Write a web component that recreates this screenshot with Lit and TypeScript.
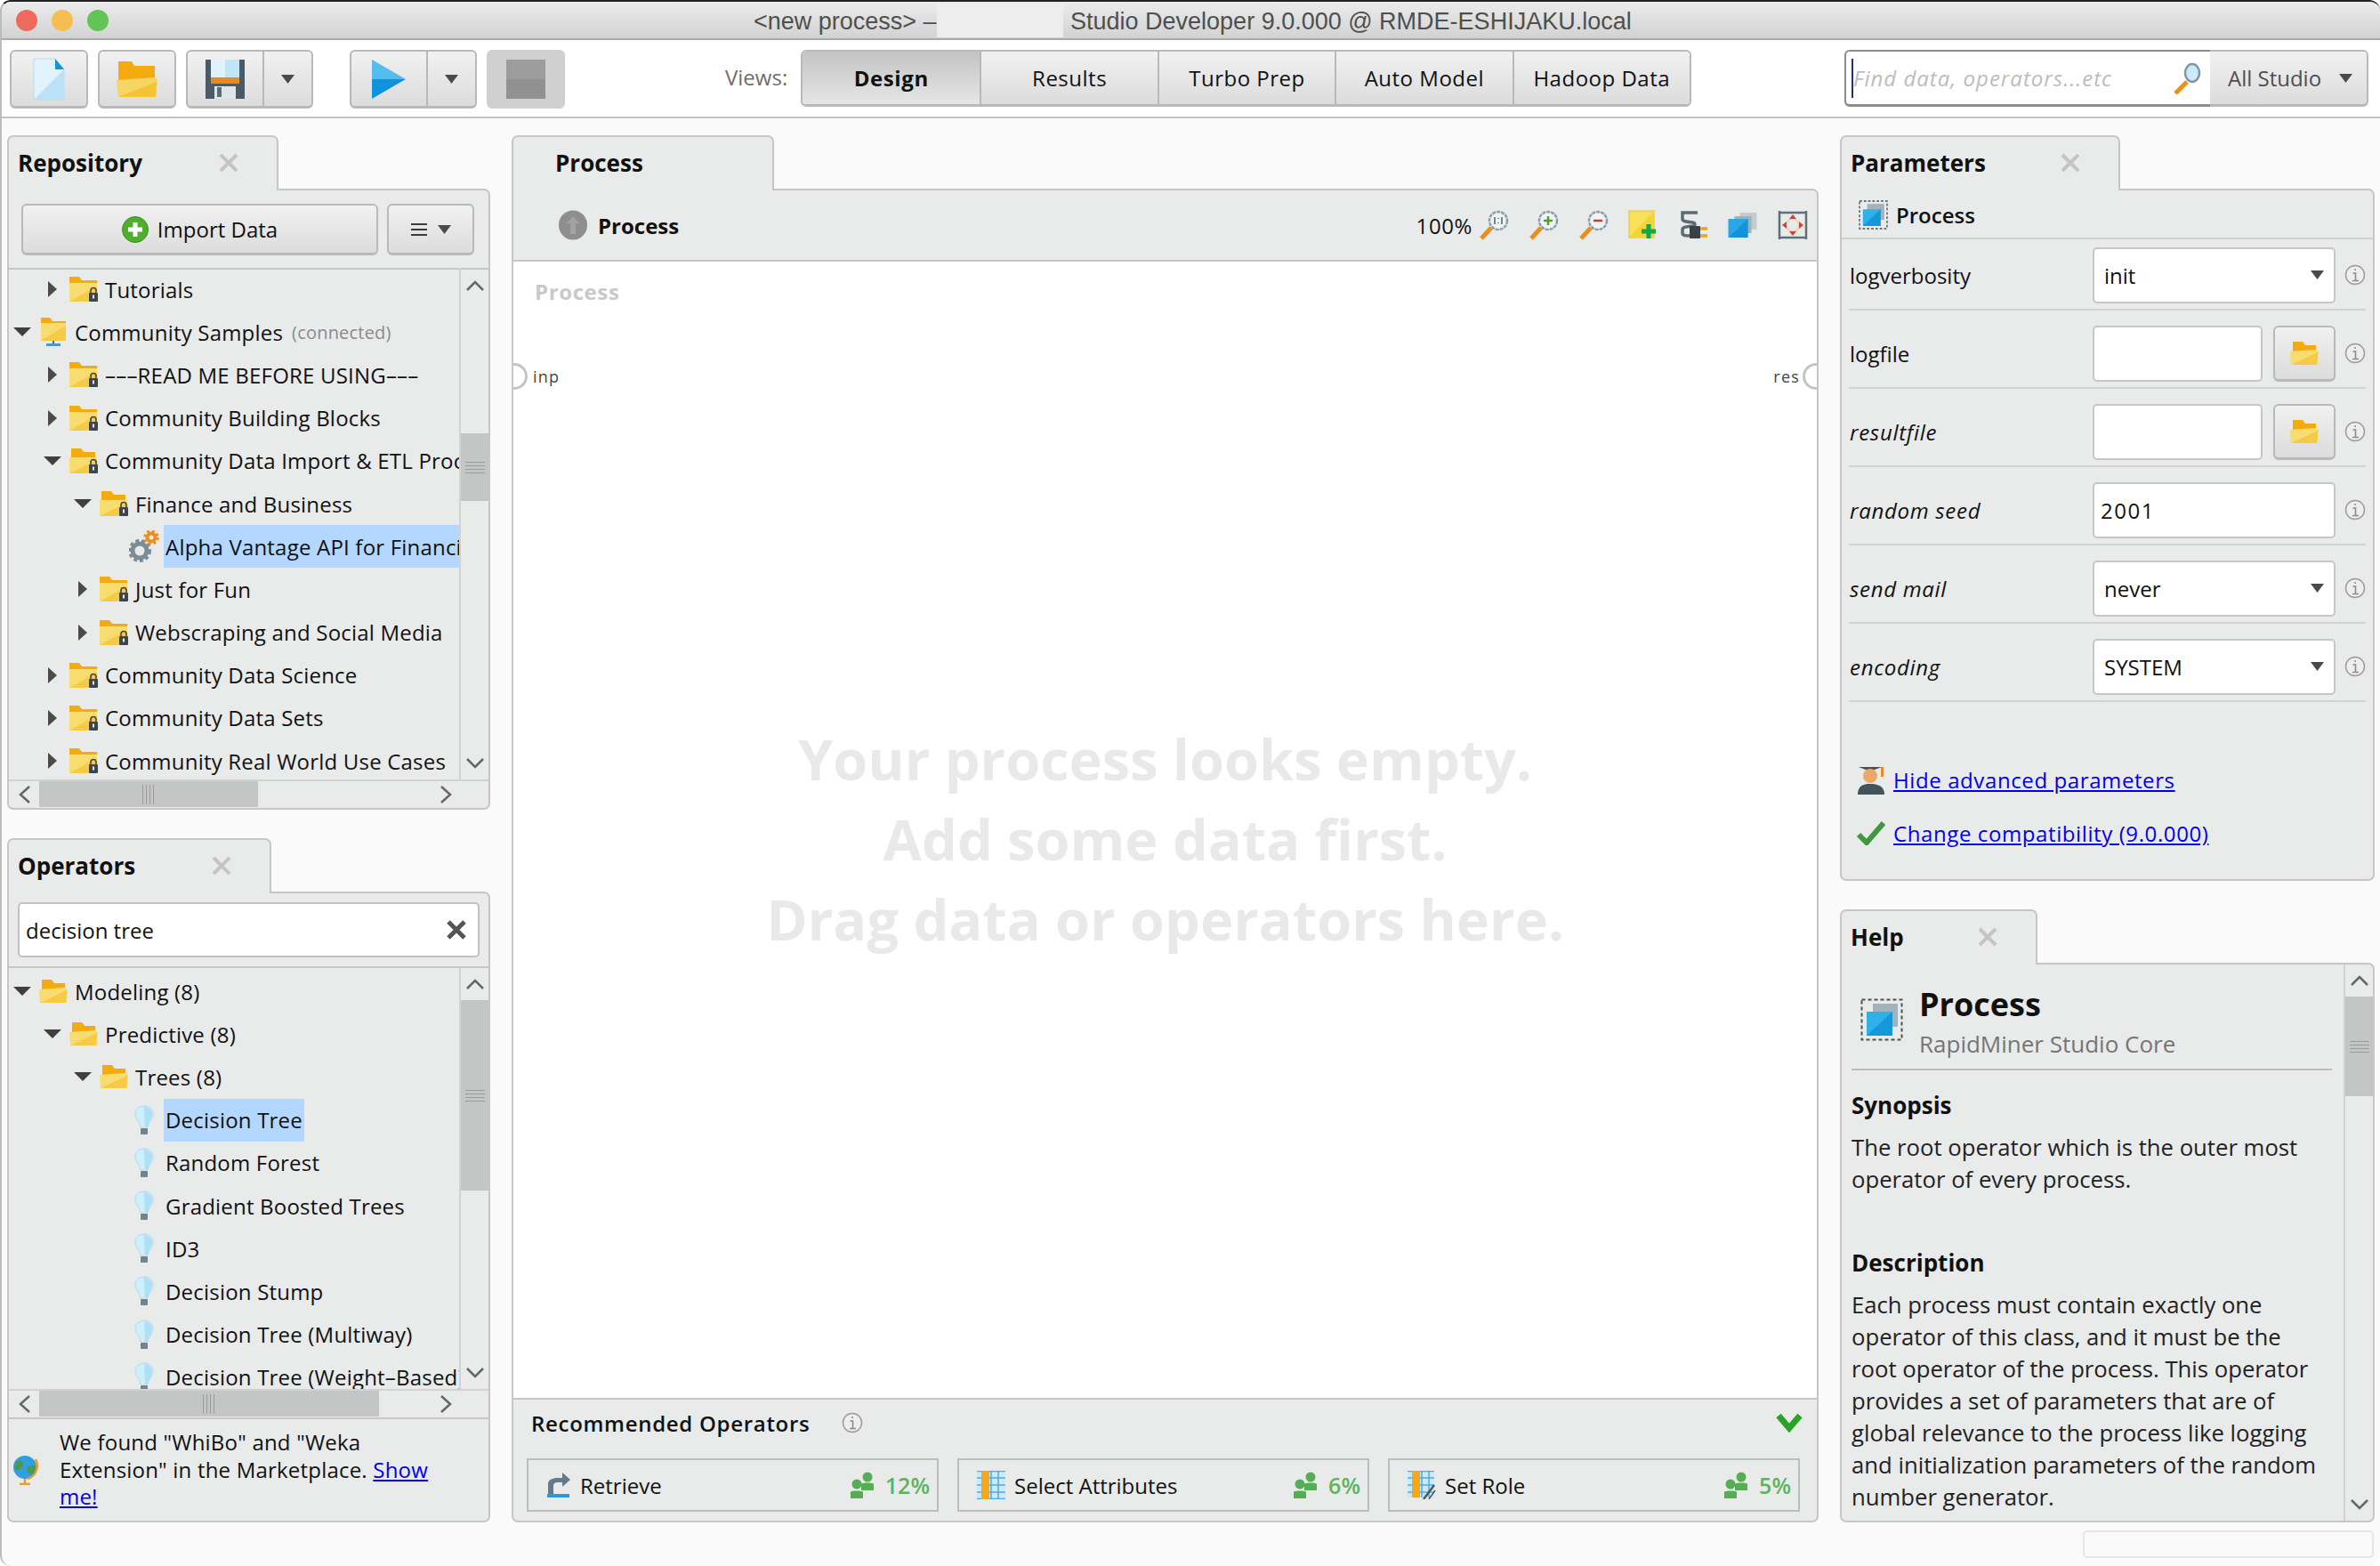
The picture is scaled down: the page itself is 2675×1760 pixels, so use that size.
import { LitElement, html, svg, css } from 'lit';
import { customElement } from 'lit/decorators.js';

// small shared icons
const arrowRight = html`<svg width="12" height="18" viewBox="0 0 12 18"><path d="M1 0l10 9-10 9z" fill="#4b4b4b"/></svg>`;
const arrowDown = html`<svg width="20" height="12" viewBox="0 0 20 12"><path d="M0 1h20L10 11z" fill="#3f3f3f"/></svg>`;
const caret = html`<svg width="15" height="10" viewBox="0 0 15 10"><path d="M0 0h15L7.5 10z" fill="#4a4a4a"/></svg>`;

const lock = svg`<path d="M24 18v-2.500a3 3 0 0 1 6 0V18" fill="none" stroke="#3f4649" stroke-width="1.600"/><rect x="22" y="18" width="10" height="10" rx="1" fill="#3f4649"/><rect x="26" y="20.500" width="2" height="4" fill="#e8e8e8"/>`;
const folderLock = html`<svg width="32" height="28" viewBox="0 0 32 28"><path d="M0 0h11l3 4h17v24H0z" fill="#f4ab10"/><path d="M0 7h31v21H0z" fill="#f7dc70"/><path d="M0 28L31 11v17z" fill="#f5ca44"/>${lock}</svg>`;
const folderLockOpen = html`<svg width="32" height="28" viewBox="0 0 32 28"><path d="M2 0h11l3 4h13v14H2z" fill="#f4ab10"/><path d="M0 10h31l1 18H0z" fill="#f7dc70"/><path d="M0 28L31 13l1 15z" fill="#f5ca44"/>${lock}</svg>`;
const folderServer = html`<svg width="30" height="32" viewBox="0 0 30 32"><path d="M1 0h10l3 4h15v22H1z" fill="#f4ab10"/><path d="M1 6h28v20H1z" fill="#f7dc70"/><path d="M1 26L29 9v17z" fill="#f5ca44"/><rect x="14" y="26" width="2" height="3" fill="#5b6b75"/><rect x="7" y="29" width="16" height="3" fill="#4a97c9"/></svg>`;
const folderOpen = html`<svg width="32" height="28" viewBox="0 0 32 28"><path d="M3 1h11l3 4h12v14H3z" fill="#f4ab10"/><path d="M0 12l29-2 3 2-1 15H1z" fill="#f7dc70"/><path d="M1 27L31 13l-1 14z" fill="#f5ca44"/></svg>`;
const bulb = html`<svg width="22" height="34" viewBox="0 0 22 34"><path d="M11 1C5 1 1 5 1 10c0 6 5 8 6 15h8c1-7 6-9 6-15 0-5-4-9-10-9z" fill="#cdeefb" stroke="#b4dbea"/><path d="M11 2c5 0 9 4 9 8 0 5-4 8-5 15h-3z" fill="#aee0f6"/><rect x="7" y="26" width="8" height="7" rx="1" fill="#75848c"/></svg>`;
const gears = html`<svg width="34" height="36" viewBox="0 0 34 36"><circle cx="12" cy="23" r="8" fill="none" stroke="#7a8c96" stroke-width="5"/><circle cx="12" cy="23" r="11.500" fill="none" stroke="#7a8c96" stroke-width="3" stroke-dasharray="4 3"/><circle cx="25" cy="8" r="4.500" fill="none" stroke="#ea8f1d" stroke-width="4"/><circle cx="25" cy="8" r="7.500" fill="none" stroke="#ea8f1d" stroke-width="2.500" stroke-dasharray="3 3"/></svg>`;
const info = html`<svg class="info" width="24" height="24" viewBox="0 0 24 24"><circle cx="12" cy="12" r="10.500" fill="#eeeeee" stroke="#9c9c9c" stroke-width="1.500"/><path d="M12 5v2M9.500 10H12.500V18M9 18.500h7" fill="none" stroke="#8a8a8a" stroke-width="1.600"/></svg>`;
const closeX = html`<svg width="22" height="22" viewBox="0 0 22 22"><path d="M2 2l18 18M20 2L2 20" stroke="#c4c4c4" stroke-width="4"/></svg>`;
const layers = html`<svg width="33" height="30" viewBox="0 0 33 30"><rect x="13" y="1" width="19" height="19" fill="#c3cbd0"/><rect x="7" y="5" width="19" height="19" fill="#9fb0b9"/><rect x="0" y="8" width="22" height="21" fill="#2aa7e6"/><path d="M0 29L22 8v21z" fill="#1593d8"/></svg>`;
const operatorIcon = (s: number) => html`<svg width="${s}" height="${s}" viewBox="0 0 48 48"><rect x="1.500" y="1.500" width="45" height="45" fill="none" stroke="#44525a" stroke-width="2" stroke-dasharray="4 3"/><rect x="14" y="6" width="28" height="26" fill="#a4b3bb"/><rect x="7" y="15" width="29" height="27" fill="#2fb0ea"/><path d="M7 42L36 15v27z" fill="#1598da"/></svg>`;
const people = html`<svg width="30" height="30" viewBox="0 0 30 30"><g fill="#55ad55"><circle cx="20" cy="6" r="5.500"/><path d="M13 14c0-2 14-2 14 0v7H13z"/><circle cx="8" cy="14" r="5.500"/><path d="M1 23c0-2 14-2 14 0v7H1z"/></g></svg>`;
const tableIcon = html`<svg width="32" height="32" viewBox="0 0 32 32"><rect width="32" height="32" fill="#cfe8f6"/><path d="M0 .500h32M0 8h32M0 16h32M0 24h32M0 31.500h32M16 0v32M24 0v32" stroke="#47ade5" stroke-width="1.500"/><rect x="5" y="0" width="9" height="32" fill="#f5a81c"/></svg>`;
const roleIcon = html`<svg width="32" height="32" viewBox="0 0 32 32"><rect width="30" height="30" fill="#cfe8f6"/><path d="M0 .500h30M0 8h30M0 16h30M0 24h30M16 0v30M24 0v30" stroke="#47ade5" stroke-width="1.500"/><rect x="5" y="0" width="9" height="30" fill="#f5a81c"/><path d="M18 32l12-16" stroke="#555" stroke-width="2.500"/><path d="M24 32l7-10" stroke="#555" stroke-width="1.500"/></svg>`;

interface TreeRow {
  d: number;
  t: string;
  kind: 'lock' | 'lockOpen' | 'server' | 'open' | 'gear' | 'bulb';
  exp?: boolean;
  leaf?: boolean;
  sel?: boolean;
  note?: string;
}

const repoRows: TreeRow[] = [
  { d: 1, t: 'Tutorials', kind: 'lock' },
  { d: 0, t: 'Community Samples', kind: 'server', exp: true, note: '(connected)' },
  { d: 1, t: '–––READ ME BEFORE USING–––', kind: 'lock' },
  { d: 1, t: 'Community Building Blocks', kind: 'lock' },
  { d: 1, t: 'Community Data Import & ETL Processing', kind: 'lockOpen', exp: true },
  { d: 2, t: 'Finance and Business', kind: 'lockOpen', exp: true },
  { d: 3, t: 'Alpha Vantage API for Financial Data', kind: 'gear', leaf: true, sel: true },
  { d: 2, t: 'Just for Fun', kind: 'lock' },
  { d: 2, t: 'Webscraping and Social Media', kind: 'lock' },
  { d: 1, t: 'Community Data Science', kind: 'lock' },
  { d: 1, t: 'Community Data Sets', kind: 'lock' },
  { d: 1, t: 'Community Real World Use Cases', kind: 'lock' },
];

const opRows: TreeRow[] = [
  { d: 0, t: 'Modeling (8)', kind: 'open', exp: true },
  { d: 1, t: 'Predictive (8)', kind: 'open', exp: true },
  { d: 2, t: 'Trees (8)', kind: 'open', exp: true },
  { d: 3, t: 'Decision Tree', kind: 'bulb', leaf: true, sel: true },
  { d: 3, t: 'Random Forest', kind: 'bulb', leaf: true },
  { d: 3, t: 'Gradient Boosted Trees', kind: 'bulb', leaf: true },
  { d: 3, t: 'ID3', kind: 'bulb', leaf: true },
  { d: 3, t: 'Decision Stump', kind: 'bulb', leaf: true },
  { d: 3, t: 'Decision Tree (Multiway)', kind: 'bulb', leaf: true },
  { d: 3, t: 'Decision Tree (Weight–Based)', kind: 'bulb', leaf: true },
];

const kindIcons = {
  lock: folderLock,
  lockOpen: folderLockOpen,
  server: folderServer,
  open: folderOpen,
  gear: gears,
  bulb,
};

const params = [
  { label: 'logverbosity', type: 'select', value: 'init' },
  { label: 'logfile', type: 'file', value: '' },
  { label: 'resultfile', type: 'file', value: '', em: true },
  { label: 'random seed', type: 'text', value: '2001', em: true },
  { label: 'send mail', type: 'select', value: 'never', em: true },
  { label: 'encoding', type: 'select', value: 'SYSTEM', em: true },
];

@customElement('app-root')
export class AppRoot extends LitElement {
  static styles = css`
    :host {
      display: block;
      width: 2675px;
      height: 1760px;
      background: #fff;
      font-family: 'Open Sans', 'Noto Sans', sans-serif;
      font-size: 24px;
      color: #111;
      overflow: hidden;
    }
    * {
      box-sizing: border-box;
    }
    svg {
      display: block;
      flex: none;
    }
    .window {
      height: 1760px;
      display: flex;
      flex-direction: column;
      background: #fafafa;
      border-left: 2px solid #bcbcbc;
      border-top: 2px solid #222;
      border-radius: 12px;
      overflow: hidden;
    }

    /* title bar */
    .titlebar {
      height: 43px;
      flex: none;
      display: flex;
      align-items: center;
      padding-top: 3px;
      background: linear-gradient(#ececec, #d2d2d2);
      border-bottom: 2px solid #a9a9a9;
      font-family: 'Liberation Sans', Arial, sans-serif;
      font-size: 27px;
      color: #4f4f4f;
    }
    .lights {
      display: flex;
      gap: 16px;
      margin: -3px 0 0 16px;
      width: 829px;
    }
    .lights i {
      width: 24px;
      height: 24px;
      border-radius: 50%;
    }
    .red { background: #ee6a5f; }
    .yellow { background: #f6bd50; }
    .green { background: #61c454; }
    .doc-name {
      width: 206px;
      white-space: nowrap;
    }
    .blanked {
      width: 142px;
      height: 38px;
      margin: -3px 8px 0 0;
      background: #ededed;
    }

    /* toolbar */
    .toolbar {
      height: 88px;
      flex: none;
      display: flex;
      align-items: flex-start;
      padding: 11px 0 0 9px;
      background: #fff;
      border-bottom: 2px solid #c2c2c2;
    }
    .btn {
      display: flex;
      height: 66px;
      border: 2px solid #b9b9b9;
      border-bottom-width: 3px;
      border-radius: 6px;
      background: linear-gradient(#f1f1f1, #dcdcdc);
      overflow: hidden;
    }
    .cell {
      display: flex;
      align-items: center;
      justify-content: center;
    }
    .cell-main { width: 84px; }
    .cell-more {
      width: 55px;
      border-left: 2px solid #b9b9b9;
    }
    .stop { background: #d0d0d0; border-color: #d0d0d0; }
    .gap-s { margin-left: 11px; }
    .gap-l { margin-left: 41px; }
    .views-label {
      margin-left: 180px;
      width: 85px;
      line-height: 62px;
      color: #6e6e6e;
    }
    .views {
      display: flex;
      height: 64px;
      border: 2px solid #b9b9b9;
      border-bottom-width: 3px;
      border-radius: 6px;
      overflow: hidden;
    }
    .views div {
      width: 199.400px;
      display: flex;
      align-items: center;
      justify-content: center;
      letter-spacing: 0.5px;
      background: linear-gradient(#f1f1f1, #dcdcdc);
      border-left: 2px solid #b9b9b9;
    }
    .views div:first-child {
      border-left: 0;
      font-weight: 700;
      letter-spacing: 0.6px;
      background: linear-gradient(#c4c4c4, #e6e6e6);
    }
    .search {
      display: flex;
      height: 64px;
      margin-left: 172px;
    }
    .search-field {
      width: 411px;
      display: flex;
      align-items: center;
      justify-content: space-between;
      padding: 0 10px 0 6px;
      background: #fff;
      border: 2px solid #8c8c8c;
      border-bottom-width: 3px;
      border-right: 0;
      border-radius: 6px 0 0 6px;
      font-style: italic;
      letter-spacing: 1px;
      color: #bcbcbc;
    }
    .search-field span {
      border-left: 2px solid #23307a;
      line-height: 44px;
    }
    .scope {
      width: 178px;
      display: flex;
      align-items: center;
      justify-content: space-between;
      padding: 0 16px 0 20px;
      color: #4f4f4f;
      background: linear-gradient(#f1f1f1, #dcdcdc);
      border: 2px solid #b9b9b9;
      border-bottom-width: 3px;
      border-left: 0;
      border-radius: 0 6px 6px 0;
    }

    /* dock layout */
    .main {
      flex: 1;
      min-height: 0;
      display: grid;
      grid-template-columns: 543px 1469px 601px;
      column-gap: 24px;
      padding: 19px 0 0 6px;
    }
    .col {
      display: flex;
      flex-direction: column;
      gap: 32px;
      min-height: 0;
    }
    .dock {
      display: flex;
      flex-direction: column;
      flex: 1;
      min-height: 0;
    }
    .dock.repo { flex: none; height: 758px; }
    .dock.params { flex: none; height: 838px; }
    .tab {
      height: 62px;
      flex: none;
      display: flex;
      align-items: center;
      justify-content: space-between;
      padding: 0 43px 2px 10px;
      margin-bottom: -2px;
      position: relative;
      background: #e9eaea;
      border: 2px solid #c6c6c6;
      border-bottom: 0;
      border-radius: 7px 7px 0 0;
      font-size: 26px;
      font-weight: 700;
    }
    .tab.plain { padding-left: 47px; }
    .body {
      flex: 1;
      min-height: 0;
      display: flex;
      flex-direction: column;
      background: #e9eaea;
      border: 2px solid #c6c6c6;
      border-radius: 0 7px 7px 7px;
      overflow: hidden;
    }

    /* repository */
    .repo-actions {
      height: 89px;
      flex: none;
      display: flex;
      gap: 10px;
      padding: 15px 0 0 14px;
      border-bottom: 2px solid #c6c6c6;
    }
    .push {
      height: 58px;
      display: flex;
      align-items: center;
      justify-content: center;
      gap: 10px;
      background: linear-gradient(#f1f1f1, #dcdcdc);
      border: 2px solid #b9b9b9;
      border-bottom-width: 3px;
      border-radius: 6px;
    }
    .import { width: 401px; }
    .menu { width: 98px; gap: 12px; }

    /* trees */
    .tree-wrap {
      flex: 1;
      min-height: 0;
      display: flex;
    }
    .tree {
      flex: 1;
      min-width: 0;
      overflow: hidden;
      letter-spacing: 0.2px;
      border-right: 2px solid #d2d2d2;
    }
    .repo-tree { margin-top: -2px; }
    .ops-tree { padding-top: 2px; }
    .row {
      height: 48.200px;
      display: flex;
      align-items: center;
      white-space: nowrap;
    }
    .twist {
      width: 22px;
      flex: none;
      display: flex;
      justify-content: center;
      margin-right: 8px;
    }
    .node {
      width: 32px;
      flex: none;
      margin-right: 6px;
      display: flex;
      justify-content: center;
    }
    .label {
      height: 100%;
      display: flex;
      align-items: center;
      padding: 0 2px;
      flex: none;
    }
    .label.sel { background: #b3d7ff; }
    .note {
      margin-left: 10px;
      font-size: 20px;
      color: #8a8a8a;
    }
    .vbar {
      width: 31px;
      flex: none;
      display: flex;
      flex-direction: column;
    }
    .chev {
      height: 36px;
      flex: none;
      display: flex;
      align-items: center;
      justify-content: center;
    }
    .track {
      flex: 1;
      min-height: 0;
    }
    .thumb {
      display: flex;
      align-items: center;
      justify-content: center;
      background: #c4c6c6;
    }
    .grip-h {
      width: 22px;
      height: 13px;
      background: repeating-linear-gradient(#9b9b9b 0 1px, transparent 1px 4px);
    }
    .grip-v {
      width: 15px;
      height: 22px;
      background: repeating-linear-gradient(90deg, #9b9b9b 0 1px, transparent 1px 4px);
    }
    .hbar {
      height: 32px;
      flex: none;
      display: flex;
      border-top: 2px solid #d2d2d2;
    }
    .hbar .chev {
      height: auto;
      width: 34px;
    }
    .hbar .thumb {
      margin-bottom: 1px;
    }
    .hbar .track {
      display: flex;
    }
    .hbar .end {
      width: 68px;
      justify-content: flex-start;
      padding-left: 14px;
    }

    /* operators */
    .op-search {
      height: 84px;
      flex: none;
      padding: 10px 10px 0 10px;
      border-bottom: 2px solid #c6c6c6;
    }
    .op-field {
      height: 62px;
      display: flex;
      align-items: center;
      justify-content: space-between;
      padding: 0 12px 0 7px;
      background: #fff;
      border: 2px solid #c2c2c2;
      border-radius: 5px;
    }
    .hint {
      height: 116px;
      flex: none;
      display: flex;
      align-items: center;
      gap: 24px;
      padding: 0 0 0 4px;
      border-top: 2px solid #c6c6c6;
      font-size: 24px;
      letter-spacing: 0.2px;
      line-height: 30.500px;
    }
    .hint div { width: 440px; }
    a {
      color: #0000ee;
      text-decoration: underline;
    }

    /* process editor */
    .proc-head {
      height: 80px;
      flex: none;
      display: flex;
      align-items: center;
      padding: 0 10px 0 51px;
      border-bottom: 2px solid #c6c6c6;
    }
    .proc-head b {
      margin-left: 12px;
      flex: 1;
    }
    .tools {
      display: flex;
      align-items: center;
      gap: 22px;
    }
    .tools svg { width: 34px; }
    .zoom-pct {
      margin-right: -15px;
      letter-spacing: 0.6px;
    }
    .canvas {
      flex: 1;
      min-height: 0;
      position: relative;
      background: #fff;
      display: flex;
      flex-direction: column;
      align-items: center;
      justify-content: center;
      padding-top: 20px;
      font-size: 63px;
      line-height: 90px;
      font-weight: 700;
      color: #e9e9e9;
    }
    .canvas-title {
      position: absolute;
      left: 24px;
      top: 17px;
      font-size: 24px;
      line-height: 34px;
      font-weight: 700;
      letter-spacing: 0.6px;
      color: #c9c9c9;
    }
    .port {
      position: absolute;
      top: 113px;
      display: flex;
      align-items: center;
      font-size: 18px;
      letter-spacing: 1.200px;
      line-height: 32px;
      font-weight: 400;
      color: #444;
    }
    .port i {
      width: 16px;
      height: 30px;
      border: 3px solid #c4c4c4;
      background: #fff;
    }
    .port-in { left: 0; gap: 6px; }
    .port-in i { border-radius: 0 16px 16px 0; border-left: 0; }
    .port-out { right: 0; gap: 3px; }
    .port-out i { border-radius: 16px 0 0 16px; border-right: 0; }
    .rec {
      height: 138px;
      flex: none;
      padding: 0 16px 0 15px;
      border-top: 2px solid #c6c6c6;
    }
    .rec-head {
      height: 66px;
      display: flex;
      align-items: center;
      padding: 0 0 14px 5px;
      font-weight: 600;
      letter-spacing: 0.7px;
    }
    .rec-head svg.info { margin-left: 36px; }
    .rec-head .collapse { margin-left: auto; margin-right: 0; }
    .cards {
      display: flex;
      gap: 21px;
    }
    .card {
      width: 463px;
      height: 60px;
      display: flex;
      align-items: center;
      gap: 10px;
      padding: 0 8px 0 20px;
      border: 2px solid #bdbdbd;
    }
    .card span { flex: 1; }
    .card em {
      font-style: normal;
      font-size: 25px;
      font-weight: 600;
      color: #5db45d;
    }

    /* parameters */
    .param-head {
      height: 55px;
      flex: none;
      display: flex;
      align-items: center;
      gap: 9px;
      padding: 1px 0 0 19px;
      border-bottom: 2px solid #cfcfcf;
      font-weight: 600;
    }
    .param {
      height: 88px;
      flex: none;
      display: grid;
      grid-template-columns: 274px 273px 1fr;
      align-items: center;
      margin: 0 8px;
      padding: 10px 0 0 0;
      border-bottom: 2px solid #d2d2d2;
    }
    .param-head + .param {
      height: 80px;
      padding-top: 2px;
    }
    .param > span {
      padding-left: 1px;
    }
    .param > span.em {
      font-style: italic;
      letter-spacing: 0.7px;
    }
    .value {
      height: 63px;
      display: flex;
      align-items: center;
      justify-content: space-between;
      padding: 0 11px;
      background: #fff;
      border: 2px solid #c6c6c6;
      border-radius: 5px;
    }
    .value.seed { padding-left: 7px; letter-spacing: 1.500px; }
    .file {
      display: grid;
      grid-template-columns: 191px 70px;
      column-gap: 12px;
    }
    .file .push { height: 63px; }
    .param svg.info { margin-left: 10px; }
    .links {
      margin: 67px 0 0 17px;
      display: flex;
      flex-direction: column;
      gap: 20px;
      letter-spacing: 0.6px;
    }
    .links div {
      height: 40px;
      display: flex;
      align-items: center;
      gap: 9px;
    }

    /* help */
    .help-wrap {
      flex: 1;
      min-height: 0;
      display: flex;
    }
    .help {
      flex: 1;
      min-width: 0;
      padding: 21px 13px 0 11px;
      border-right: 2px solid #d2d2d2;
      overflow: hidden;
    }
    .help-head {
      display: flex;
      gap: 18px;
      padding: 0 0 8px 10px;
      border-bottom: 2px solid #bcbcbc;
    }
    .help-head svg { margin-top: 17px; }
    .help-head h1 {
      margin: 0;
      font-size: 36px;
      line-height: 48px;
      font-weight: 700;
    }
    .help-head p {
      margin: 0;
      font-size: 26px;
      line-height: 40px;
      color: #757575;
    }
    .help h2 {
      margin: 21px 0 12px;
      font-size: 26px;
      line-height: 36px;
      font-weight: 700;
    }
    .help p.text {
      width: 526px;
      margin: 0 0 57px;
      font-size: 25.700px;
      line-height: 36px;
      color: #222;
    }
    .help p.text + h2 { margin-top: 0; }
    .footer {
      height: 49px;
      flex: none;
      display: flex;
      justify-content: flex-end;
      padding: 9px 7px 9px 0;
    }
    .status {
      width: 327px;
      border: 2px solid #e6e6e6;
      border-radius: 5px;
    }
  `;

  vbar(top: number, h: number) {
    return html`<div class="vbar">
      <div class="chev">
        <svg width="20" height="12" viewBox="0 0 20 12"><path d="M1 11l9-9 9 9" fill="none" stroke="#666" stroke-width="2.500"/></svg>
      </div>
      <div class="track">
        <div class="thumb" style="margin-top:${top}px;height:${h}px"><div class="grip-h"></div></div>
      </div>
      <div class="chev">
        <svg width="20" height="12" viewBox="0 0 20 12"><path d="M1 1l9 9 9-9" fill="none" stroke="#666" stroke-width="2.500"/></svg>
      </div>
    </div>`;
  }

  hbar(w: number) {
    return html`<div class="hbar">
      <div class="chev">
        <svg width="13" height="20" viewBox="0 0 13 20"><path d="M12 1l-10 9 10 9" fill="none" stroke="#666" stroke-width="2.500"/></svg>
      </div>
      <div class="track"><div class="thumb" style="width:${w}px"><div class="grip-v"></div></div></div>
      <div class="chev end">
        <svg width="13" height="20" viewBox="0 0 13 20"><path d="M1 1l10 9-10 9" fill="none" stroke="#666" stroke-width="2.500"/></svg>
      </div>
    </div>`;
  }

  tab(title: string, width: number, closable = true) {
    return html`<div class="tab ${closable ? '' : 'plain'}" style="width:${width}px">
      <span>${title}</span>${closable ? closeX : ''}
    </div>`;
  }

  treeRow(r: TreeRow) {
    return html`<div class="row" style="padding-left:${4 + 34 * r.d}px">
      <div class="twist">${r.leaf ? '' : r.exp ? arrowDown : arrowRight}</div>
      <div class="node">${kindIcons[r.kind]}</div>
      <div class="label ${r.sel ? 'sel' : ''}">${r.t}${r.note ? html`<span class="note">${r.note}</span>` : ''}</div>
    </div>`;
  }

  param(p: (typeof params)[number]) {
    let control;
    if (p.type === 'select') {
      control = html`<div class="value">${p.value}${caret}</div>`;
    } else if (p.type === 'file') {
      control = html`<div class="file">
        <div class="value"></div>
        <div class="push">${folderOpen}</div>
      </div>`;
    } else {
      control = html`<div class="value seed">${p.value}</div>`;
    }
    return html`<div class="param">
      <span class="${p.em ? 'em' : ''}">${p.label}</span>
      ${control}${info}
    </div>`;
  }

  renderToolbar() {
    return html`<div class="toolbar">
      <div class="btn"><div class="cell cell-main">
        <svg width="36" height="48" viewBox="0 0 36 48"><path d="M1 1h24l10 12v34H1z" fill="#e2f3fd" stroke="#b9dcee"/><path d="M1 47L35 13v34z" fill="#bbe2f7"/><path d="M25 1l10 12H25z" fill="#1593d8"/></svg>
      </div></div>
      <div class="btn gap-s"><div class="cell cell-main">
        <svg width="46" height="42" viewBox="0 0 46 42"><path d="M2 1h15l3 5h23v20H2z" fill="#f4ab10"/><path d="M0 22l44-3 2 3-2 19H2z" fill="#f7d564"/><path d="M2 41L45 24l-1 17z" fill="#f4c432"/></svg>
      </div></div>
      <div class="btn gap-s">
        <div class="cell cell-main">
          <svg width="44" height="44" viewBox="0 0 44 44"><path d="M0 0h44v44H0z" fill="#4a5a66"/><rect x="6" y="0" width="32" height="20" fill="#bfe5f9"/><rect x="6" y="0" width="16" height="20" fill="#e0f2fc"/><rect x="6" y="20" width="32" height="7" fill="#ea8a1a"/><rect x="10" y="30" width="24" height="14" fill="#dfe5e8"/><rect x="13" y="31" width="5" height="11" fill="#5b6b75"/></svg>
        </div>
        <div class="cell cell-more">${caret}</div>
      </div>
      <div class="btn gap-l">
        <div class="cell cell-main">
          <svg width="38" height="44" viewBox="0 0 38 44"><path d="M0 0l38 22H0z" fill="#55bcef"/><path d="M0 44l38-22H0z" fill="#0f93dc"/></svg>
        </div>
        <div class="cell cell-more">${caret}</div>
      </div>
      <div class="btn gap-s stop"><div class="cell cell-main">
        <svg width="44" height="44" viewBox="0 0 44 44"><rect width="44" height="22" fill="#9c9c9c"/><rect y="22" width="44" height="22" fill="#919191"/></svg>
      </div></div>
      <div class="views-label">Views:</div>
      <div class="views">
        <div>Design</div><div>Results</div><div>Turbo Prep</div><div>Auto Model</div><div>Hadoop Data</div>
      </div>
      <div class="search">
        <div class="search-field">
          <span>Find data, operators...etc</span>
          <svg width="36" height="36" viewBox="0 0 36 36"><ellipse cx="26" cy="12" rx="8" ry="10" fill="#cdeafa" stroke="#7f97a4" stroke-width="2.500"/><path d="M20 22L7 35" stroke="#ea8f1d" stroke-width="5"/></svg>
        </div>
        <div class="scope">All Studio ${caret}</div>
      </div>
    </div>`;
  }

  renderProcessTools() {
    const glass = (inner: unknown) => html`<svg width="34" height="34" viewBox="0 0 34 34"><circle cx="22" cy="12" r="10" fill="#eef3f5" stroke="#8c9da6" stroke-width="2.500" stroke-dasharray="4 1"/>${inner}<path d="M14 20L3 32" stroke="#ea8f1d" stroke-width="5"/></svg>`;
    return html`<div class="tools">
      <span class="zoom-pct">100%</span>
      ${glass(svg`<path d="M18 8v8M26 8v8M22 9v1M22 14v1" stroke="#6a7b84" stroke-width="1.800"/>`)}
      ${glass(svg`<path d="M22 7v10M17 12h10" stroke="#5a9a2a" stroke-width="2.500"/>`)}
      ${glass(svg`<path d="M17 12h10" stroke="#c8402a" stroke-width="2.500"/>`)}
      <svg width="32" height="34" viewBox="0 0 32 34"><rect y="1" width="28" height="30" fill="#f8e05a" stroke="#e4c02a"/><path d="M0 31L28 1v30z" fill="#f5d535"/><path d="M22 16v16M14 24h16" stroke="#12a64e" stroke-width="5"/></svg>
      <svg width="34" height="34" viewBox="0 0 34 34"><path d="M22 3H5v7c0 5 14 2 14 6 0 4-14 1-14 6v4c0 3 4 3 8 3" fill="none" stroke="#5d6b73" stroke-width="3.500"/><rect x="13" y="18" width="12" height="14" rx="1" fill="#3a4146"/><path d="M25 21h8M25 29h8" stroke="#e6a52a" stroke-width="3.500"/></svg>
      ${layers}
      <svg width="32" height="34" viewBox="0 0 32 34"><path d="M1 1v32M31 1v32M0 3h32M0 31h32" stroke="#5f707a" stroke-width="2.500"/><circle cx="16" cy="17" r="7" fill="none" stroke="#e8d0c8" stroke-width="2"/><path d="M16 5l4 5h-8zM16 29l4-5h-8zM4 17l5-4v8zM28 17l-5-4v8z" fill="#c8492a"/></svg>
    </div>`;
  }

  renderLeft() {
    return html`<div class="col">
      <div class="dock repo">
        ${this.tab('Repository', 305)}
        <div class="body">
          <div class="repo-actions">
            <div class="push import">
              <svg width="30" height="32" viewBox="0 0 30 32"><circle cx="15" cy="16" r="14.500" fill="#4fae2e" stroke="#3a8f22"/><path d="M15 8v16M7 16h16" stroke="#fff" stroke-width="5"/></svg>
              Import Data
            </div>
            <div class="push menu">
              <svg width="18" height="16" viewBox="0 0 18 16"><path d="M0 2h18M0 8h18M0 14h18" stroke="#3a3a3a" stroke-width="2"/></svg>
              ${caret}
            </div>
          </div>
          <div class="tree-wrap">
            <div class="tree repo-tree">${repoRows.map(r => this.treeRow(r))}</div>
            ${this.vbar(148, 76)}
          </div>
          ${this.hbar(246)}
        </div>
      </div>
      <div class="dock">
        ${this.tab('Operators', 297)}
        <div class="body">
          <div class="op-search">
            <div class="op-field">
              decision tree
              <svg width="24" height="24" viewBox="0 0 24 24"><path d="M3 3l18 18M21 3L3 21" stroke="#555" stroke-width="5"/></svg>
            </div>
          </div>
          <div class="tree-wrap">
            <div class="tree ops-tree">${opRows.map(r => this.treeRow(r))}</div>
            ${this.vbar(0, 214)}
          </div>
          ${this.hbar(382)}
          <div class="hint">
            <svg width="29" height="34" viewBox="0 0 29 34"><circle cx="14" cy="14" r="13" fill="#2f9fe0"/><path d="M4 8c6-4 9 0 7 5s-5 5-8 3zM17 14c5-3 9-3 9 1s-4 8-7 6-3-5-2-7z" fill="#4c9a4a"/><path d="M26 5c4 8 1 19-9 22M14 27v5M8 33h12" fill="none" stroke="#ea9a2a" stroke-width="2.500"/></svg>
            <div>We found "WhiBo" and "Weka Extension" in the Marketplace. <a>Show me!</a></div>
          </div>
        </div>
      </div>
    </div>`;
  }

  renderCenter() {
    return html`<div class="col">
      <div class="dock">
        ${this.tab('Process', 295, false)}
        <div class="body">
          <div class="proc-head">
            <svg width="32" height="34" viewBox="0 0 32 34"><ellipse cx="16" cy="17" rx="16" ry="16.500" fill="#8e8e8e"/><path d="M16 7l7 8h-4v12h-6V15H9z" fill="#a3a3a3"/></svg>
            <b>Process</b>
            ${this.renderProcessTools()}
          </div>
          <div class="canvas">
            <div class="canvas-title">Process</div>
            <div class="port port-in"><i></i>inp</div>
            <div class="port port-out">res<i></i></div>
            <div>Your process looks empty.</div>
            <div>Add some data first.</div>
            <div>Drag data or operators here.</div>
          </div>
          <div class="rec">
            <div class="rec-head">
              Recommended Operators ${info}
              <svg class="collapse" width="30" height="22" viewBox="0 0 30 22"><path d="M3 3l12 14L27 3" fill="none" stroke="#2aa32a" stroke-width="7"/></svg>
            </div>
            <div class="cards">
              <div class="card">
                <svg width="28" height="30" viewBox="0 0 28 30"><path d="M2 25V14C2 9 7 7 13 7h5V1l9 8-9 8v-5h-6c-2 0-4 1-4 4v9z" fill="#64798a"/><rect x="1" y="25" width="25" height="4" fill="#2a9ade"/></svg>
                <span>Retrieve</span>${people}<em>12%</em>
              </div>
              <div class="card">${tableIcon}<span>Select Attributes</span>${people}<em>6%</em></div>
              <div class="card">${roleIcon}<span>Set Role</span>${people}<em>5%</em></div>
            </div>
          </div>
        </div>
      </div>
    </div>`;
  }

  renderRight() {
    return html`<div class="col">
      <div class="dock params">
        ${this.tab('Parameters', 315)}
        <div class="body">
          <div class="param-head">${operatorIcon(33)}Process</div>
          ${params.map(p => this.param(p))}
          <div class="links">
            <div>
              <svg width="32" height="34" viewBox="0 0 32 34"><path d="M2 3h26l-13 5z" fill="#44525a"/><rect x="27" y="3" width="3" height="11" fill="#e8892a"/><circle cx="15" cy="13" r="8" fill="#eda868"/><path d="M1 34c0-10 6-12 14-12s16 2 16 12z" fill="#44525a"/></svg>
              <a>Hide advanced parameters</a>
            </div>
            <div>
              <svg width="32" height="28" viewBox="0 0 32 28"><path d="M2 16l9 9L30 3" fill="none" stroke="#3f9a3f" stroke-width="6"/></svg>
              <a>Change compatibility (9.0.000)</a>
            </div>
          </div>
        </div>
      </div>
      <div class="dock">
        ${this.tab('Help', 222)}
        <div class="body">
          <div class="help-wrap">
            <div class="help">
              <div class="help-head">
                ${operatorIcon(48)}
                <div>
                  <h1>Process</h1>
                  <p>RapidMiner Studio Core</p>
                </div>
              </div>
              <h2>Synopsis</h2>
              <p class="text">The root operator which is the outer most operator of every process.</p>
              <h2>Description</h2>
              <p class="text">Each process must contain exactly one operator of this class, and it must be the root operator of the process. This operator provides a set of parameters that are of global relevance to the process like logging and initialization parameters of the random number generator.</p>
            </div>
            ${this.vbar(0, 112)}
          </div>
        </div>
      </div>
    </div>`;
  }

  render() {
    return html`<div class="window">
      <div class="titlebar">
        <div class="lights"><i class="red"></i><i class="yellow"></i><i class="green"></i></div>
        <div class="doc-name">&lt;new process&gt; –</div>
        <div class="blanked"></div>
        <div>Studio Developer 9.0.000 @ RMDE-ESHIJAKU.local</div>
      </div>
      ${this.renderToolbar()}
      <div class="main">${this.renderLeft()}${this.renderCenter()}${this.renderRight()}</div>
      <div class="footer"><div class="status"></div></div>
    </div>`;
  }
}
